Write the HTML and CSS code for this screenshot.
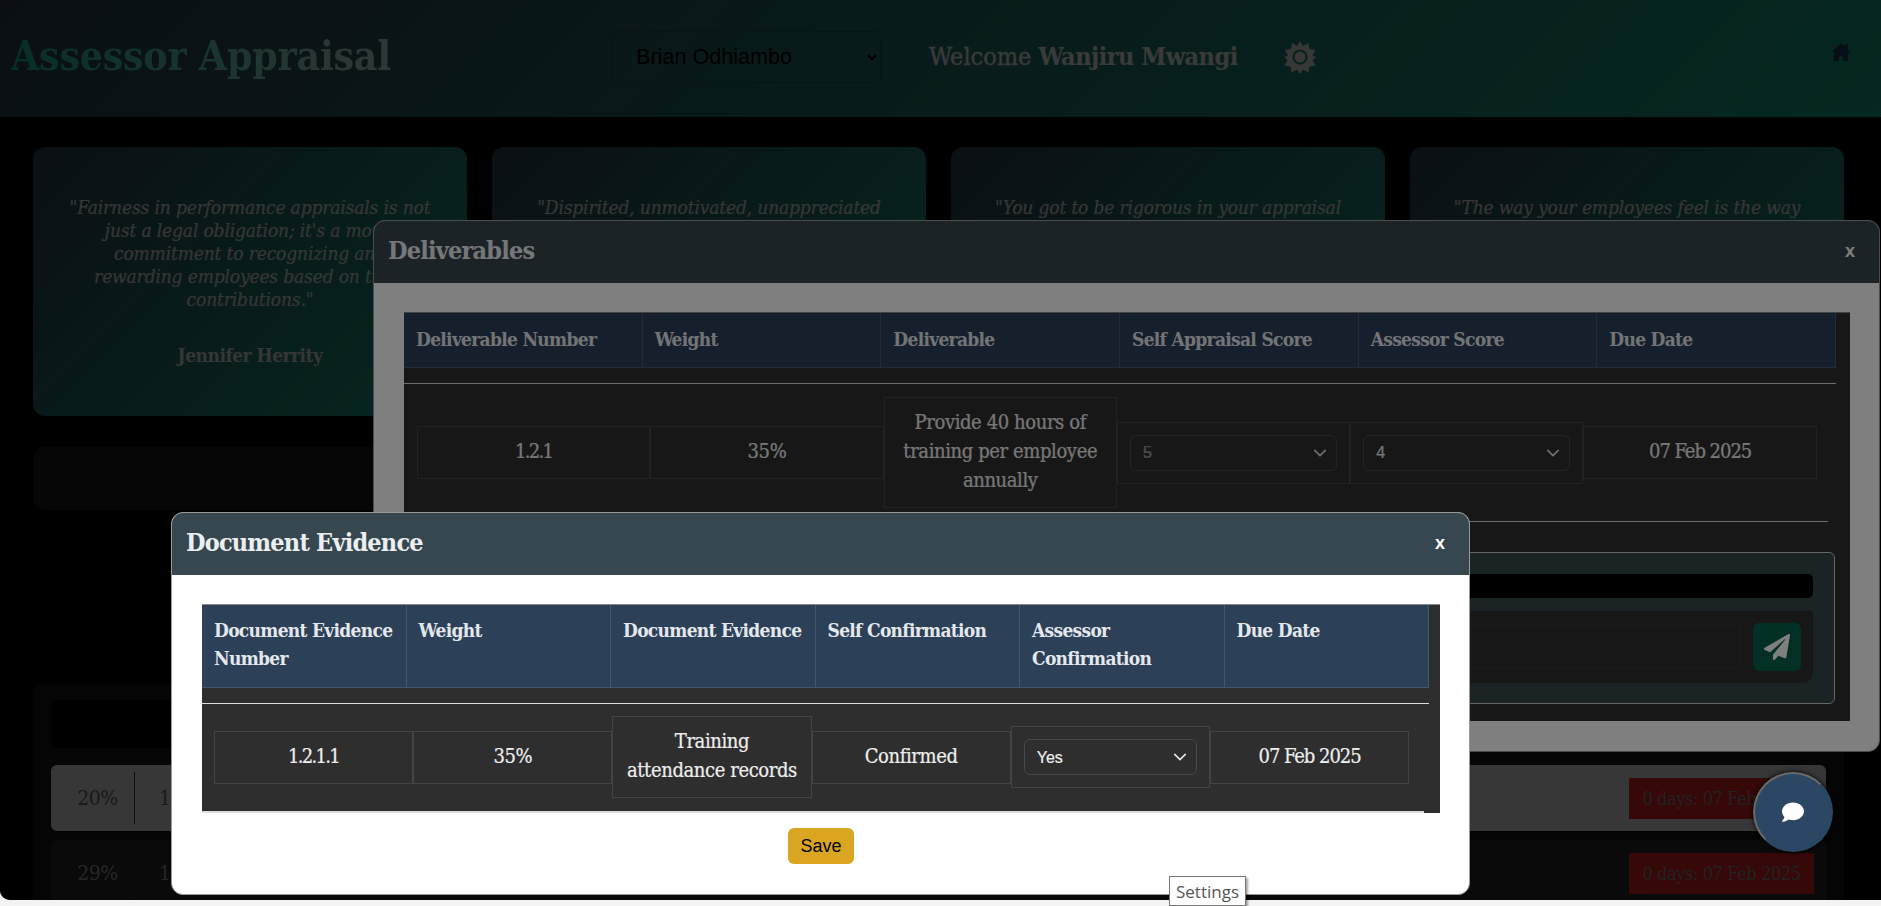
FILE: index.html
```html
<!DOCTYPE html>
<html lang="en">
<head>
<meta charset="utf-8">
<title>Assessor Appraisal</title>
<link rel="stylesheet" href="styles.css">
</head>
<body>
<div class="app">
  <header class="topbar">
    <h1 class="brand">Assessor Appraisal</h1>
    <select class="staff-select"><option>Brian Odhiambo</option></select>
    <p class="welcome">Welcome <strong>Wanjiru Mwangi</strong></p>
    <svg class="gear" viewBox="0 0 32 32" aria-hidden="true"><path fill-rule="evenodd" d="M16 0l3 5 5.500-3 1 6 6 1-3 5.500 3.500 1.500-3.500 3 3 5.500-6 1-1 6-5.500-3-3 5-3-5-5.500 3-1-6-6-1 3-5.500L.5 16 4 14.500 1 9l6-1 1-6 5.500 3zM16 8.500a7.500 7.500 0 1 0 0 15 7.500 7.500 0 0 0 0-15zM16 10.500a5.500 5.500 0 1 1 0 11 5.500 5.500 0 0 1 0-11z"/></svg>
    <svg class="home" viewBox="0 0 24 22" aria-hidden="true"><path d="M12 1L1 11.500h3V21h6v-6h4v6h6v-9.500h3L19.500 8V2.500h-3v2.700z"/></svg>
  </header>

  <section class="quotes">
    <article class="quote">
      <p class="quote-text">"Fairness in performance appraisals is not<br>just a legal obligation; it's a moral<br>commitment to recognizing and<br>rewarding employees based on their<br>contributions."</p>
      <p class="quote-author">Jennifer Herrity</p>
    </article>
    <article class="quote"><p class="quote-text">"Dispirited, unmotivated, unappreciated</p></article>
    <article class="quote"><p class="quote-text">"You got to be rigorous in your appraisal</p></article>
    <article class="quote"><p class="quote-text">"The way your employees feel is the way</p></article>
  </section>

  <div class="strip"></div>

  <section class="panel">
    <div class="panel-bar"></div>
    <div class="goal goal-active">
      <span class="goal-pct">20%</span><span class="goal-num">1.1</span>
      <span class="goal-due">0 days: 07 Feb 2025</span>
    </div>
    <div class="goal">
      <span class="goal-pct">29%</span><span class="goal-num">1.2</span>
      <span class="goal-due">0 days: 07 Feb 2025</span>
    </div>
  </section>

  <div class="backdrop"></div>

  <section class="modal modal-deliverables">
    <div class="modal-head">
      <h2 class="modal-title">Deliverables</h2>
      <span class="modal-close">x</span>
    </div>
    <div class="modal-body">
      <div class="sheet sheet-wide">
        <div class="thead">
          <div class="th">Deliverable Number</div>
          <div class="th">Weight</div>
          <div class="th">Deliverable</div>
          <div class="th">Self Appraisal Score</div>
          <div class="th">Assessor Score</div>
          <div class="th">Due Date</div>
        </div>
        <div class="rule"></div>
        <div class="trow">
          <div class="td td-code">1.2.1</div>
          <div class="td">35%</div>
          <div class="td">Provide 40 hours of training per employee annually</div>
          <div class="td td-select"><select class="score muted"><option>5</option></select></div>
          <div class="td td-select"><select class="score"><option>4</option></select></div>
          <div class="td td-date">07 Feb 2025</div>
        </div>
        <div class="rule rule-short"></div>
        <div class="comments">
          <div class="comment-log"></div>
          <div class="comment-form">
            <div class="comment-input"></div>
            <button class="send" type="button" aria-label="Send">
              <svg viewBox="0 0 512 512" aria-hidden="true"><path d="M476 3.200L12.500 270.600c-18.100 10.400-15.800 35.600 2.200 43.200L121 358.400l287.300-253.200c5.500-4.900 13.300 2.600 8.600 8.300L176 407v80.500c0 23.600 28.500 32.900 42.500 15.800L282 426l124.600 52.200c14.200 6 30.400-2.900 33-18.200l72-432C515 7.800 493.300-6.800 476 3.200z"/></svg>
            </button>
          </div>
        </div>
      </div>
    </div>
  </section>

  <div class="backdrop"></div>

  <section class="modal modal-evidence">
    <div class="modal-head">
      <h2 class="modal-title">Document Evidence</h2>
      <span class="modal-close">x</span>
    </div>
    <div class="modal-body">
      <div class="sheet sheet-narrow">
        <div class="thead">
          <div class="th">Document Evidence Number</div>
          <div class="th">Weight</div>
          <div class="th">Document Evidence</div>
          <div class="th">Self Confirmation</div>
          <div class="th">Assessor Confirmation</div>
          <div class="th">Due Date</div>
        </div>
        <div class="rule"></div>
        <div class="trow">
          <div class="td td-code">1.2.1.1</div>
          <div class="td">35%</div>
          <div class="td">Training attendance records</div>
          <div class="td">Confirmed</div>
          <div class="td td-select"><select class="score"><option>Yes</option></select></div>
          <div class="td td-date">07 Feb 2025</div>
        </div>
        <div class="rule rule-end"></div>
      </div>
      <div class="actions"><button class="save" type="button">Save</button></div>
    </div>
  </section>

  <button class="chat" type="button" aria-label="Chat">
    <svg viewBox="0 0 512 512" aria-hidden="true"><path d="M256 32C114.600 32 0 125.100 0 240c0 49.600 21.400 95 57 130.700C44.500 421.100 2.700 466 2.200 466.500c-2.200 2.300-2.800 5.700-1.500 8.700S4.800 480 8 480c66.300 0 116-31.800 140.600-51.400 32.700 12.300 69 19.400 107.400 19.400 141.400 0 256-93.100 256-208S397.400 32 256 32z"/></svg>
  </button>
</div>
<div class="tooltip">Settings</div>
</body>
</html>
```

FILE: styles.css
```css
* { box-sizing: border-box; }
html, body { margin: 0; height: 906px; overflow: hidden; }
body {
  position: relative;
  background: #f3f3f3;
  font-family: "DejaVu Serif Condensed", "DejaVu Serif", serif;
  color: #fff;
}
p, h1, h2 { margin: 0; }

.app {
  position: relative;
  height: 900px;
  overflow: hidden;
  background: #000;
  border-bottom-left-radius: 10px;
}

/* top bar */
.topbar {
  display: flex;
  align-items: center;
  height: 117px;
  padding: 0 0 4px 11px;
  background: linear-gradient(135deg, #2c3e50 0%, #16a085 100%);
}
.brand {
  width: 600px;
  font-size: 40.500px;
  font-weight: 700;
  line-height: 1.2;
  letter-spacing: -.2px;
  background: linear-gradient(90deg, #1abc9c 0%, #ecf0f1 85%);
  -webkit-background-clip: text;
  background-clip: text;
  color: transparent;
}
.staff-select {
  width: 270px;
  height: 52px;
  padding: 0 20px;
  margin-right: 48px;
  background: transparent;
  border: 1px solid rgba(44, 62, 80, .6);
  border-radius: 6px;
  font: 21.600px "Liberation Sans", sans-serif;
  color: #000;
}
.welcome { width: 355px; font-size: 25px; color: #e8e8e8; -webkit-text-stroke: .3px #e8e8e8; }
.welcome strong { font-weight: 700; letter-spacing: -.5px; -webkit-text-stroke: 0; }
.gear { width: 32px; height: 32px; fill: #ddd; }
.home { width: 22px; height: 20px; margin: -9px 29px 0 auto; fill: #1f3f58; }

/* quote cards */
.quotes {
  display: grid;
  grid-template-columns: repeat(4, 1fr);
  gap: 25px;
  padding: 30px 37px 0 33px;
}
.quote {
  height: 269px;
  padding: 49px 20px 0;
  border-radius: 12px;
  background: linear-gradient(135deg, #2c3e50 0%, #16a085 100%);
  text-align: center;
  color: #d8d8d8;
}
.quote-text { font-size: 19px; line-height: 23px; font-style: italic; letter-spacing: -.15px; -webkit-text-stroke: .2px #d8d8d8; }
.quote-author { margin-top: 33px; font-size: 19px; font-weight: 700; line-height: 23px; letter-spacing: -.5px; }

.strip {
  height: 63px;
  margin: 31px 37px 0 33px;
  border-radius: 12px;
  background: #181818;
}

.panel {
  height: 240px;
  margin: 173px 37px 0 33px;
  padding: 17px 18px;
  border-radius: 12px;
  background: #141414;
}
.panel-bar { height: 48px; border-radius: 8px; background: #000; }
.goal {
  display: flex;
  align-items: center;
  height: 66px;
  margin-top: 9px;
  padding-right: 12px;
  border-radius: 6px;
  background: #282828;
  font-size: 21px;
  color: #999;
}
.goal-active { margin-top: 17px; background: #ddd; color: #666; }
.goal-pct {
  width: 84px;
  height: 52px;
  padding-left: 10px;
  line-height: 52px;
  text-align: center;
  border-right: 1px solid #333;
  letter-spacing: -.5px;
}
.goal-num { margin-left: 24px; }
.goal-due {
  width: 185px;
  height: 41px;
  margin-left: auto;
  line-height: 41px;
  text-align: center;
  white-space: nowrap;
  overflow: hidden;
  font-size: 18px;
  letter-spacing: -.4px;
  background: #d82020;
  color: #888;
}

.backdrop {
  position: absolute;
  inset: 0;
  background: rgba(0, 0, 0, .5);
}

/* modals */
.modal {
  position: absolute;
  display: flex;
  flex-direction: column;
  overflow: hidden;
  border: 1px solid #999;
  border-radius: 12px;
  background: #fff;
}
.modal-deliverables { left: 373px; top: 220px; width: 1507px; height: 532px; }
.modal-evidence { left: 171px; top: 512px; width: 1299px; height: 383px; }
.modal-head {
  display: flex;
  align-items: center;
  justify-content: space-between;
  flex: none;
  height: 62px;
  padding: 0 24px 3px 14px;
  background: #37474f;
}
.modal-title { font-size: 25px; font-weight: 700; letter-spacing: -.8px; color: #eceff1; }
.modal-close { font: 700 18px/1 "Liberation Sans", sans-serif; }
.modal-body { flex: 1; padding: 29px 29px 0 30px; }

.sheet { background: #2e2e2e; border-top: 1px solid #888; }
.sheet-wide { height: 409px; padding-right: 14px; }
.sheet-narrow { height: 209px; padding-right: 11px; }
.thead {
  display: grid;
  grid-template-columns: repeat(6, 1fr);
  background: #2c4058;
}
.sheet-wide .thead { height: 55px; }
.sheet-narrow .thead { height: 83px; }
.th {
  padding: 11px 4px 11px 12px;
  border-right: 1px solid rgba(255, 255, 255, .12);
  border-bottom: 1px solid rgba(255, 255, 255, .12);
  font-size: 19px;
  font-weight: 700;
  line-height: 28px;
  letter-spacing: -.7px;
  color: #e4e8ec;
}
.sheet-wide .th { padding-top: 12px; }
.rule { height: 1px; margin-top: 15px; background: #ddd; }
.rule-short { margin-top: 13px; margin-right: 8px; }
.rule-end { margin-top: 13px; margin-right: 5px; height: 2px; }
.trow {
  display: grid;
  align-items: center;
}
.sheet-wide .trow { grid-template-columns: repeat(6, 233.300px); padding: 13px 0 0 13px; }
.sheet-narrow .trow { grid-template-columns: repeat(6, 199.200px); padding: 12px 0 0 12px; }
.td {
  padding: 10px 12px 12px;
  border: 1px solid #444;
  font-size: 20px;
  line-height: 29px;
  letter-spacing: -.4px;
  text-align: center;
  color: #eee;
  -webkit-text-stroke: .2px #eee;
}
.td-code { letter-spacing: -1.700px; }
.td-date { letter-spacing: -1.050px; }
.td-select { padding: 12px; }
.score {
  display: block;
  width: 100%;
  height: 36px;
  padding: 0 12px;
  appearance: none;
  border: 1px solid #484848;
  border-radius: 6px;
  background-color: transparent;
  background-image: url("data:image/svg+xml,%3Csvg xmlns='http://www.w3.org/2000/svg' viewBox='0 0 16 16'%3E%3Cpath fill='none' stroke='%23ddd' stroke-width='2' stroke-linecap='round' stroke-linejoin='round' d='M2 5l6 6 6-6'/%3E%3C/svg%3E");
  background-repeat: no-repeat;
  background-position: right 8px center;
  background-size: 16px 14px;
  font: 16px "Liberation Sans", sans-serif;
  color: #eee;
}
.score.muted { color: #888; }
.score option { color: #000; }

.comments {
  height: 152px;
  margin: 30px 1px 0 0;
  padding: 21px 21px 0 0;
  border: 1px solid #ccc;
  border-radius: 6px;
  background: #34494b;
}
.comment-log { height: 24px; border-radius: 5px; background: #000; }
.comment-form {
  display: flex;
  align-items: center;
  gap: 12px;
  height: 72px;
  margin-top: 13px;
  padding-right: 12px;
  border-radius: 0 0 10px 0;
  background: #2e2e2e;
}
.comment-input {
  flex: 1;
  height: 44px;
  border: 1px solid #3a3a3a;
  border-radius: 4px;
}
.send {
  display: flex;
  align-items: center;
  justify-content: center;
  width: 48px;
  height: 48px;
  padding: 0;
  border: 0;
  border-radius: 6px;
  background: #056048;
}
.send svg { width: 26px; height: 26px; fill: #fff; }

.actions { display: flex; justify-content: center; padding-top: 15px; }
.save {
  width: 66px;
  height: 36px;
  padding: 0;
  border: 0;
  border-radius: 6px;
  background: #daa520;
  font: 18px "Liberation Sans", sans-serif;
  color: #000;
}

/* floating */
.chat {
  position: absolute;
  left: 1753px;
  top: 772px;
  display: flex;
  align-items: center;
  justify-content: center;
  width: 80px;
  height: 80px;
  padding: 0;
  border: 2px solid #2c4763;
  border-top-color: #6a6a6a;
  border-left-color: #6a6a6a;
  border-radius: 50%;
  background: #2c4763;
  box-shadow: 0 0 5px #000;
}
.chat svg { width: 22px; height: 22px; fill: #fff; }

.tooltip {
  position: absolute;
  left: 1169px;
  top: 876px;
  width: 77px;
  height: 30px;
  border: 1px solid #777;
  box-shadow: 2px 2px 2px rgba(0, 0, 0, .35);
  background: #fff;
  font: 17px/29px "Open Sans", sans-serif;
  text-align: center;
  color: #555;
}
```
